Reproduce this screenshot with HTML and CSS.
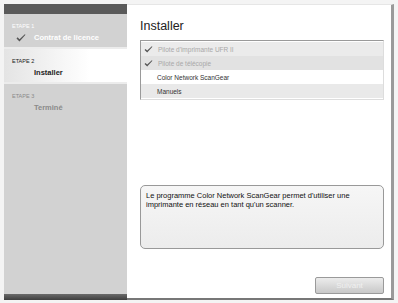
FILE: index.html
```html
<!DOCTYPE html>
<html lang="fr">
<head>
    <meta charset="UTF-8">
    <title>Installer</title>
    <link rel="stylesheet" href="styles.css">
</head>
<body>
    <div class="window">
        <div class="sidebar">
            <div class="sidebar-top"></div>
            <div class="step done">
                <div class="step-label">ETAPE 1</div>
                <div class="step-name">
                    <svg class="tick" width="10" height="8" viewBox="0 0 10 8"><path d="M0.5 4.5 L3.5 7.5 L9.5 0.8 L8.8 0.3 L3.5 5.2 L1.6 3.3 Z" fill="#555"/></svg>Contrat de licence
                </div>
            </div>
            <div class="step current">
                <div class="step-label">ETAPE 2</div>
                <div class="step-name">Installer</div>
            </div>
            <div class="step todo">
                <div class="step-label">ETAPE 3</div>
                <div class="step-name">Terminé</div>
            </div>
            <div class="sidebar-bottom"></div>
        </div>
        <div class="main">
            <h1>Installer</h1>
            <div class="list">
                <div class="item installed">
                    <svg class="tick" width="9" height="7" viewBox="0 0 10 8"><path d="M0.5 4.5 L3.5 7.5 L9.5 0.8 L8.8 0.3 L3.5 5.2 L1.6 3.3 Z" fill="#555"/></svg>Pilote d'imprimante UFR II
                </div>
                <div class="item installed alt">
                    <svg class="tick" width="9" height="7" viewBox="0 0 10 8"><path d="M0.5 4.5 L3.5 7.5 L9.5 0.8 L8.8 0.3 L3.5 5.2 L1.6 3.3 Z" fill="#555"/></svg>Pilote de télécopie
                </div>
                <div class="item">Color Network ScanGear</div>
                <div class="item alt">Manuels</div>
            </div>
            <div class="description">
                Le programme Color Network ScanGear permet d'utiliser une imprimante en réseau en tant qu'un scanner.
            </div>
            <div class="actions">
                <button class="next" disabled>Suivant</button>
            </div>
        </div>
    </div>
</body>
</html>
```

FILE: styles.css
```css
body {
    margin: 0;
    background-color: #f4f4f4;
    font-family: "Liberation Sans", Arial, sans-serif;
}
.window {
    display: flex;
    width: 390px;
    height: 296px;
    margin: 4px 0 0 4px;
    background-color: white;
}
.sidebar {
    width: 123px;
    display: flex;
    flex-direction: column;
    background-color: #d2d2d2;
}
.sidebar-top {
    height: 10px;
    background-color: #5a5a5a;
}
.sidebar-bottom {
    margin-top: auto;
    height: 6px;
    background: linear-gradient(#6a6a6a, #3e3e3e);
}
.step {
    height: 33px;
    padding-left: 8px;
    border-bottom: 2px solid #ececec;
}
.step-label {
    font-size: 5.5px;
    padding-top: 9px;
    height: 7px;
}
.step-name {
    display: flex;
    align-items: center;
    font-size: 7.5px;
    font-weight: bold;
    padding-left: 22px;
    margin-top: 3px;
}
.step-name .tick {
    margin-left: -18px;
    margin-right: 8px;
}
.step.done {
    color: white;
}
.step.current {
    background: linear-gradient(to right, #e4e4e4, white 70%);
    color: #222;
}
.step.todo {
    color: #8a8a8a;
    border-bottom: none;
}
.main {
    flex: 1;
    display: flex;
    flex-direction: column;
    padding: 0 7px 0 13px;
    border-right: 3px solid #9a9a9a;
    border-bottom: 2px solid #777;
    border-top: 1px solid #e6e6e6;
}
h1 {
    font-size: 12.5px;
    font-weight: normal;
    color: #222;
    margin: 14px 0 0 0;
    height: 21px;
}
.list {
    border: 1px solid #9a9a9a;
    border-right-color: #ddd;
    border-bottom-color: #ddd;
    background-color: white;
    padding: 1px 0;
}
.item {
    display: flex;
    align-items: center;
    height: 14px;
    font-size: 6.5px;
    color: #333;
    padding-left: 16px;
    background-color: white;
}
.item.alt {
    background-color: #e9e9e9;
}
.item.installed {
    color: #a8a8a8;
    padding-left: 3px;
    background-color: #ebebeb;
}
.item.installed.alt {
    background-color: #e2e2e2;
}
.item .tick {
    margin-right: 5px;
}
.description {
    margin-top: 85px;
    height: 52px;
    padding: 5px;
    border: 1px solid #999;
    border-radius: 5px;
    background: linear-gradient(#f6f6f6, #ececec);
    font-size: 7.5px;
    line-height: 9px;
    color: #111;
}
.actions {
    display: flex;
    justify-content: flex-end;
    margin-top: 28px;
}
.next {
    width: 69px;
    height: 17px;
    border: 1px solid #9a9a9a;
    border-radius: 2px;
    background: linear-gradient(#ececec, #c8c8c8);
    color: #f0f0f0;
    font-family: "Liberation Sans", Arial, sans-serif;
    font-size: 8px;
}
```
